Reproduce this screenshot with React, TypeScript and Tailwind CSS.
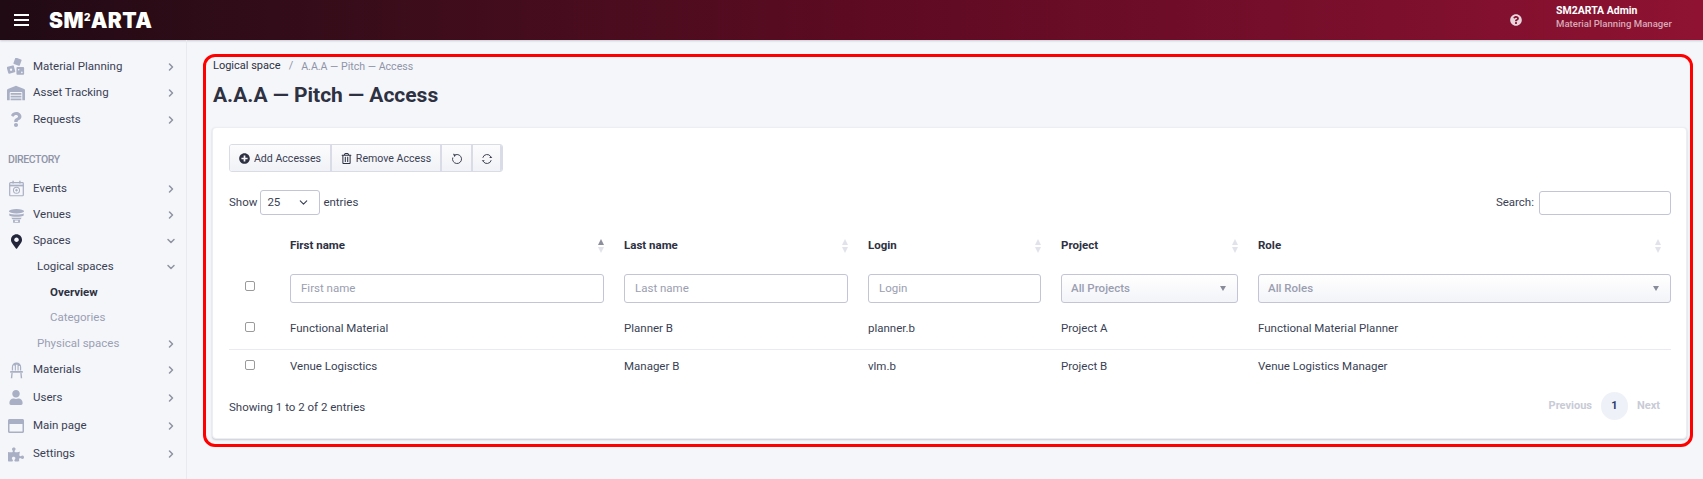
import React from "react";
import {
  FaWarehouse,
  FaQuestion,
  FaMapMarkerAlt,
  FaUser,
  FaRegWindowMaximize,
  FaPuzzlePiece,
  FaPlusCircle,
  FaRegTrashAlt,
  FaQuestionCircle,
} from "react-icons/fa";
import { ChevronRight, ChevronDown } from "lucide-react";

const BlocksIcon = () => (
  <svg viewBox="0 0 20 20" className="w-[18px] h-[18px] text-[#a9afc4]" fill="currentColor">
    <rect x="8" y="0.5" width="7.5" height="7.5" rx="1" transform="rotate(20 12 4)" />
    <rect x="0.5" y="9" width="8" height="8" rx="1" transform="rotate(-15 4 13)" />
    <rect x="10.5" y="10" width="8.5" height="8.5" rx="1" />
    <circle cx="13" cy="13" r="0.9" fill="#f5f6f9" />
    <circle cx="16.5" cy="16" r="0.9" fill="#f5f6f9" />
    <circle cx="4.5" cy="13" r="1.3" fill="#f5f6f9" />
  </svg>
);

const CalendarIcon = () => (
  <svg viewBox="0 0 20 20" className="w-[17px] h-[17px] text-[#a9afc4]" fill="none" stroke="currentColor">
    <rect x="2" y="3" width="16" height="15.5" rx="1" strokeWidth="1.4" />
    <path d="M2 6.5h16" strokeWidth="2" />
    <path d="M6 1v3M14 1v3" strokeWidth="1.6" />
    <circle cx="10" cy="12" r="3.6" strokeWidth="1.2" />
    <circle cx="10" cy="12" r="1" fill="currentColor" />
  </svg>
);

const StadiumIcon = () => (
  <svg viewBox="0 0 20 20" className="w-[17px] h-[17px] text-[#a9afc4]" fill="currentColor">
    <ellipse cx="10" cy="5" rx="9" ry="2.6" />
    <path d="M1.5 7.5c2 1.6 15 1.6 17 0v2.5c-2 2-15 2-17 0z" />
    <path d="M4 12.5h12l-1 2H5z" />
    <path d="M6 15h8v3.5H6zM8 16v1.6h4V16z" fillRule="evenodd" />
  </svg>
);

const ChairIcon = () => (
  <svg viewBox="0 0 20 20" className="w-[17px] h-[17px] text-[#a9afc4]" fill="currentColor">
    <path d="M4.5 10V6a5.5 5.5 0 0 1 11 0v4h-1.4V4.6h-1.6V10h-1.3V3.2H9.3V10H8V4.2H6V10z" />
    <rect x="2.5" y="10.5" width="15" height="2.2" rx="0.6" />
    <path d="M4 13h1.5l-.5 6H3.3zM14.5 13H16l.7 6H15z" />
  </svg>
);

const UndoIcon = () => (
  <svg viewBox="0 0 16 16" className="w-[12px] h-[12px]" fill="none" stroke="#3b3f4f" strokeWidth="1.3">
    <path d="M5.5 2.6A6 6 0 1 1 2.4 6" />
    <path d="M2.8 1.2 6 2.4 4.6 5.2" fill="#3b3f4f" strokeWidth="0.6" />
  </svg>
);

const SyncIcon = () => (
  <svg viewBox="0 0 16 16" className="w-[12px] h-[12px]" fill="none" stroke="#3b3f4f" strokeWidth="1.3">
    <path d="M2.4 6.4A5.8 5.8 0 0 1 13 4.8" />
    <path d="M13.6 9.6A5.8 5.8 0 0 1 3 11.2" />
    <path d="M15 6.5h-4l2-2.6zM1 9.5h4l-2 2.6z" fill="#3b3f4f" stroke="none" />
  </svg>
);

type NavItem = {
  label: string;
  icon?: React.ReactNode;
  open?: boolean;
  arrow?: boolean;
  rowClass: string;
  textClass: string;
};

const g = "text-[#a9afc4]";

const topItems: NavItem[] = [
  { label: "Material Planning", icon: <BlocksIcon />, arrow: true, rowClass: "h-[27px]", textClass: "pl-[33px] text-[#3a3f55]" },
  { label: "Asset Tracking", icon: <FaWarehouse className={`w-[18px] h-[16px] ${g}`} />, arrow: true, rowClass: "h-[26px]", textClass: "pl-[33px] text-[#3a3f55]" },
  { label: "Requests", icon: <FaQuestion className={`w-[14px] h-[15px] ${g}`} />, arrow: true, rowClass: "h-[27px]", textClass: "pl-[33px] text-[#3a3f55]" },
];

const dirItems: NavItem[] = [
  { label: "Events", icon: <CalendarIcon />, arrow: true, rowClass: "h-[27px]", textClass: "pl-[33px] text-[#3a3f55]" },
  { label: "Venues", icon: <StadiumIcon />, arrow: true, rowClass: "h-[26px]", textClass: "pl-[33px] text-[#3a3f55]" },
  { label: "Spaces", icon: <FaMapMarkerAlt className="w-[11px] h-[15px] text-[#23263a]" />, open: true, arrow: true, rowClass: "h-[26px]", textClass: "pl-[33px] text-[#3a3f55]" },
  { label: "Logical spaces", open: true, arrow: true, rowClass: "h-[26px]", textClass: "pl-[37px] text-[#3a3f55]" },
  { label: "Overview", rowClass: "h-[25px]", textClass: "pl-[50px] font-bold text-[#2d3142]" },
  { label: "Categories", rowClass: "h-[26px]", textClass: "pl-[50px] text-[#9a9fb5]" },
  { label: "Physical spaces", arrow: true, rowClass: "h-[26px]", textClass: "pl-[37px] text-[#9a9fb5]" },
  { label: "Materials", icon: <ChairIcon />, arrow: true, rowClass: "h-[26px]", textClass: "pl-[33px] text-[#3a3f55]" },
  { label: "Users", icon: <FaUser className={`w-[14px] h-[15px] ${g}`} />, arrow: true, rowClass: "h-[29px]", textClass: "pl-[33px] text-[#3a3f55]" },
  { label: "Main page", icon: <FaRegWindowMaximize className={`w-[16px] h-[16px] ${g}`} />, arrow: true, rowClass: "h-[28px]", textClass: "pl-[33px] text-[#3a3f55]" },
  { label: "Settings", icon: <FaPuzzlePiece className={`w-[16px] h-[15px] ${g}`} />, arrow: true, rowClass: "h-[28px]", textClass: "pl-[33px] text-[#3a3f55]" },
];

const NavRow = ({ item }: { item: NavItem }) => (
  <div className={`relative flex items-center text-[11.5px] ${item.rowClass}`}>
    {item.icon && (
      <span className="absolute left-[7px] w-[18px] flex justify-center">{item.icon}</span>
    )}
    <span className={`flex-1 ${item.textClass}`}>{item.label}</span>
    {item.arrow &&
      (item.open ? (
        <ChevronDown className="w-[12px] h-[12px] mr-[9px] text-[#8f93a3]" strokeWidth={3} />
      ) : (
        <ChevronRight className="w-[12px] h-[12px] mr-[9px] text-[#8f93a3]" strokeWidth={3} />
      ))}
  </div>
);

const SortArrows = ({ active }: { active?: boolean }) => (
  <span className="flex flex-col gap-[2px]">
    <span className={`w-0 h-0 border-x-[3.5px] border-x-transparent border-b-[6px] ${active ? "border-b-[#8d8f9c]" : "border-b-[#e2e3ea]"}`} />
    <span className="w-0 h-0 border-x-[3.5px] border-x-transparent border-t-[6px] border-t-[#e2e3ea]" />
  </span>
);

const headers = ["First name", "Last name", "Login", "Project", "Role"];

const rows = [
  { cells: ["Functional Material", "Planner B", "planner.b", "Project A", "Functional Material Planner"], rowClass: "h-[41px] border-b border-[#eaebf0]" },
  { cells: ["Venue Logisctics", "Manager B", "vlm.b", "Project B", "Venue Logistics Manager"], rowClass: "h-[34px]" },
];

const Check = () => (
  <span className="block w-[8px] h-[8px] box-content border border-[#9a9a9a] rounded-[2px] bg-white ml-[16px]" />
);

const TextFilter = ({ label }: { label: string }) => (
  <div className="h-[29px] flex items-center px-[10px] pt-[1px] border border-[#c3c4d6] rounded-[3px] text-[11.5px] text-[#9a9eb0] bg-white">
    {label}
  </div>
);

const SelectFilter = ({ label }: { label: string }) => (
  <div className="h-[29px] flex items-center justify-between pl-[9px] pr-[11px] pt-[1px] border border-[#c3c4d6] rounded-[3px] text-[11.5px] font-medium text-[#9a9eb0] bg-gradient-to-b from-white to-[#f3f4f8]">
    {label}
    <span className="w-0 h-0 border-x-[3px] border-x-transparent border-t-[5px] border-t-[#888b99]" />
  </div>
);

const btn =
  "h-full flex items-center justify-center gap-[4px] pt-[1px] border-r-2 border-[#d9dbe6] bg-gradient-to-b from-[#fcfcfd] to-[#f1f2f6] text-[10.6px] text-[#3a3f55]";

export default function App() {
  return (
    <div
      className="w-[1703px] h-[479px] overflow-hidden flex flex-col bg-[#f5f6f9]"
      style={{ fontFamily: "Roboto, 'Liberation Sans', sans-serif" }}
    >
      {/* Header */}
      <header className="h-[40px] shrink-0 flex items-center bg-gradient-to-r from-[#200a14] via-[#5c0a22] to-[#8f1232] shadow-[0_1px_2px_#c9cbd4]">
        <div className="w-[15px] ml-[14px] flex flex-col gap-[3px]">
          <span className="h-[2px] bg-white" />
          <span className="h-[2px] bg-white" />
          <span className="h-[2px] bg-white" />
        </div>
        <div className="ml-[20px] text-white font-black text-[21px] tracking-[0.4px] leading-none" style={{ fontFamily: "Inter, sans-serif" }}>
          SM<span className="text-[10px] align-[7px] leading-none">2</span>ARTA
        </div>
        <div className="ml-auto flex items-center h-full">
          <FaQuestionCircle className="w-[12px] h-[12px] text-[#e8d5dc] mr-[21px]" />
          <div className="w-[160px] pl-[12px] pb-[7px] h-full flex flex-col justify-center border-l border-[#84102e]">
            <div className="text-[10.5px] leading-[13px] font-bold text-white">SM2ARTA Admin</div>
            <div className="text-[9.6px] leading-[13px] font-medium text-[#d8a9b7]">Material Planning Manager</div>
          </div>
        </div>
      </header>

      <div className="flex-1 flex min-h-0">
        {/* Sidebar */}
        <aside className="w-[187px] shrink-0 border-r border-[#e9eaf0] pt-[13px]">
          {topItems.map((item) => (
            <NavRow key={item.label} item={item} />
          ))}
          <div className="mt-[17px] mb-[5px] pl-[8px] text-[10.5px] tracking-[-0.4px] font-medium leading-[20px] text-[#8f94a8]">DIRECTORY</div>
          {dirItems.map((item) => (
            <NavRow key={item.label} item={item} />
          ))}
        </aside>

        {/* Content */}
        <main className="flex-1 min-w-0 pt-[14px] pl-[16px] pr-[10px]">
          <div className="h-[393px] border-[3px] border-[#ff0000] rounded-[12px] pl-[6px] pr-[3px] pb-[5px] flex flex-col">
            <div className="flex items-center gap-[8px] h-[17px] mt-[1px] pl-[1px] text-[11px]">
              <span className="text-[#2d3142]">Logical space</span>
              <span className="text-[#8f94a8]">/</span>
              <span className="text-[10.6px] text-[#8f94a8]">A.A.A — Pitch — Access</span>
            </div>
            <h1 className="mt-[7px] pl-[1px] text-[21px] leading-[26px] font-bold text-[#2d3142]">A.A.A — Pitch — Access</h1>

            <section className="mt-[19px] flex-1 bg-white rounded-[4px] border border-[#eceef3] shadow-[0_1px_2px_#c9cbd4] pt-[16px] pl-[16px] pr-[16px]">
              <div className="flex h-[28px] w-[274px] rounded-[3px] border border-[#d9dbe6] overflow-hidden">
                <div className={`${btn} w-[102px]`}>
                  <FaPlusCircle className="w-[11px] h-[11px] text-[#2d3142]" />
                  Add Accesses
                </div>
                <div className={`${btn} w-[110px]`}>
                  <FaRegTrashAlt className="w-[11px] h-[11px] text-[#2d3142]" />
                  Remove Access
                </div>
                <div className={`${btn} w-[31px] border-r`}>
                  <UndoIcon />
                </div>
                <div className={`${btn} flex-1 border-r-0`}>
                  <SyncIcon />
                </div>
              </div>

              <div className="mt-[18px] w-[1442px] flex items-center justify-between h-[25px] text-[11.5px] text-[#3a3f55]">
                <div className="flex items-center gap-[3px]">
                  <span>Show</span>
                  <div className="w-[60px] h-[25px] flex items-center justify-between pl-[6px] pr-[9px] border border-[#c3c4d6] rounded-[3px]">
                    25
                    <ChevronDown className="w-[13px] h-[13px] text-[#3a3f55]" />
                  </div>
                  <span>entries</span>
                </div>
                <div className="flex items-center gap-[5px]">
                  <span>Search:</span>
                  <div className="w-[132px] h-[24px] border border-[#c3c4d6] rounded-[3px]" />
                </div>
              </div>

              <table className="mt-[9px] w-[1442px] table-fixed border-collapse text-[11.5px] text-[#3a3f55]">
                <colgroup>
                  <col className="w-[51px]" />
                  <col className="w-[334px]" />
                  <col className="w-[244px]" />
                  <col className="w-[193px]" />
                  <col className="w-[197px]" />
                  <col />
                </colgroup>
                <thead>
                  <tr className="h-[44px]">
                    <th />
                    {headers.map((h, i) => (
                      <th key={h} className="px-[10px] text-left">
                        <div className="flex items-center justify-between font-bold text-[#2d3142]">
                          {h}
                          <SortArrows active={i === 0} />
                        </div>
                      </th>
                    ))}
                  </tr>
                  <tr className="h-[40px]">
                    <td><div className="-mt-[4px]"><Check /></div></td>
                    <td className="px-[10px]"><TextFilter label="First name" /></td>
                    <td className="px-[10px]"><TextFilter label="Last name" /></td>
                    <td className="px-[10px]"><TextFilter label="Login" /></td>
                    <td className="px-[10px]"><SelectFilter label="All Projects" /></td>
                    <td className="pl-[10px]"><SelectFilter label="All Roles" /></td>
                  </tr>
                </thead>
                <tbody>
                  {rows.map((r) => (
                    <tr key={r.cells[0]} className={r.rowClass}>
                      <td><div className="-mt-[3px]"><Check /></div></td>
                      {r.cells.map((c) => (
                        <td key={c} className="px-[10px]">{c}</td>
                      ))}
                    </tr>
                  ))}
                </tbody>
              </table>

              <div className="mt-[9px] w-[1442px] flex items-center justify-between text-[11.5px] text-[#3a3f55]">
                <span className="mt-[3px]">Showing 1 to 2 of 2 entries</span>
                <div className="flex items-center gap-[9px] text-[11px] font-bold text-[#c9cbd6] pr-[11px]">
                  <span>Previous</span>
                  <span className="w-[27px] h-[28px] rounded-full bg-[#eef1f8] text-[#2c3a6b] flex items-center justify-center">1</span>
                  <span>Next</span>
                </div>
              </div>
            </section>
          </div>
        </main>
      </div>
    </div>
  );
}
